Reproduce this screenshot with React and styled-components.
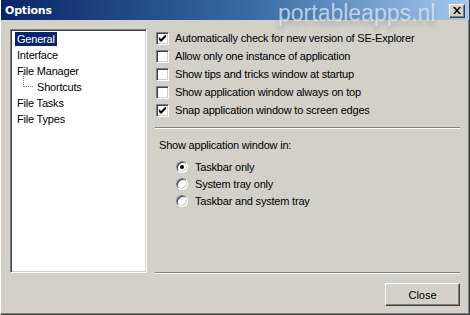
import React, { useState } from 'react';
import styled, { createGlobalStyle } from 'styled-components';

const CHECKS = [
  { id: 0, text: 'Automatically check for new version of SE-Explorer', checked: true },
  { id: 1, text: 'Allow only one instance of application', checked: false },
  { id: 2, text: 'Show tips and tricks window at startup', checked: false },
  { id: 3, text: 'Show application window always on top', checked: false },
  { id: 4, text: 'Snap application window to screen edges', checked: true },
];

const PLACES = [
  { id: 0, text: 'Taskbar only' },
  { id: 1, text: 'System tray only' },
  { id: 2, text: 'Taskbar and system tray' },
];

const PAGES = [
  { id: 0, text: 'General' },
  { id: 1, text: 'Interface' },
  { id: 2, text: 'File Manager' },
  { id: 3, text: 'Shortcuts', child: true },
  { id: 4, text: 'File Tasks' },
  { id: 5, text: 'File Types' },
];

const Options = () => {
  const [page, setPage] = useState(0);
  const [checks, setChecks] = useState(CHECKS.map(c => c.checked));
  const [place, setPlace] = useState(0);

  const toggle = i => {
    setChecks(current => current.map((v, j) => (j === i ? !v : v)));
  };

  return (
    <Window>
      <GlobalStyle />
      <TitleBar>
        <Title>Options</Title>
        <Watermark>portableapps.nl</Watermark>
        <CloseBox>
          <svg width="8" height="7" viewBox="0 0 8 7">
            <path d="M0 0h2l2 2.5L6 0h2L5 3.5 8 7H6L4 4.5 2 7H0l3-3.5z" fill="#000" />
          </svg>
        </CloseBox>
      </TitleBar>
      <Body>
        <Tree>
          {PAGES.map(({ id, text, child }) => (
            <TreeItem key={id} child={child} onClick={() => setPage(id)}>
              {child && <Connector />}
              <TreeLabel selected={page === id}>{text}</TreeLabel>
            </TreeItem>
          ))}
        </Tree>
        <Panel>
          <CheckList>
            {CHECKS.map(({ id, text }) => (
              <CheckRow key={id} onClick={() => toggle(id)}>
                <CheckBox>
                  {checks[id] && (
                    <svg width="7" height="7" viewBox="0 0 7 7">
                      <path d="M0 2v3l2 2 5-5V-1L2 4z" fill="#000" />
                    </svg>
                  )}
                </CheckBox>
                {text}
              </CheckRow>
            ))}
          </CheckList>
          <Separator />
          <GroupLabel>Show application window in:</GroupLabel>
          <RadioList>
            {PLACES.map(({ id, text }) => (
              <RadioRow key={id} onClick={() => setPlace(id)}>
                <Radio>{place === id && <Dot />}</Radio>
                {text}
              </RadioRow>
            ))}
          </RadioList>
          <Spacer />
          <Separator />
        </Panel>
      </Body>
      <Footer>
        <Button>Close</Button>
      </Footer>
    </Window>
  );
};

export default Options;

const GlobalStyle = createGlobalStyle`
  html, body {
    margin: 0;
    padding: 0;
    background: #d4d0c8;
  }
  body {
    font-family: 'Liberation Sans', Arial, sans-serif;
    font-size: 11px;
    letter-spacing: -0.2px;
    color: #000;
  }
`;

const Window = styled.div`
  position: relative;
  display: flex;
  flex-direction: column;
  box-sizing: border-box;
  width: 470px;
  height: 315px;
  background: #d4d0c8;
  border-left: 1px solid #ffffff;
  border-right: 1px solid #404040;
  border-bottom: 1px solid #404040;
  box-shadow: inset -1px -1px #808080;
  overflow: hidden;
`;

const TitleBar = styled.div`
  position: relative;
  display: flex;
  align-items: center;
  justify-content: space-between;
  height: 20px;
  padding: 0 4px 0 4px;
  background: linear-gradient(to right, #0a246a 0%, #3a6ea5 55%, #a6caf0 100%);
  flex-shrink: 0;
`;

const Title = styled.span`
  color: #ffffff;
  font-family: 'DejaVu Sans', sans-serif;
  font-weight: 700;
  font-size: 11px;
  letter-spacing: -0.2px;
`;

const Watermark = styled.span`
  position: absolute;
  left: 277px;
  top: 1px;
  font-family: 'Liberation Sans', Arial, sans-serif;
  font-size: 23px;
  line-height: 24px;
  letter-spacing: 0;
  color: rgba(225, 236, 252, 0.72);
  text-shadow: 0 4px 4px rgba(60, 60, 60, 0.25);
  pointer-events: none;
  z-index: 2;
`;

const CloseBox = styled.span`
  display: flex;
  align-items: center;
  justify-content: center;
  box-sizing: border-box;
  width: 16px;
  height: 14px;
  margin-top: 1px;
  background: #d4d0c8;
  border: 1px solid;
  border-color: #ffffff #404040 #404040 #ffffff;
  box-shadow: inset -1px -1px #808080;
`;

const Body = styled.div`
  display: flex;
  gap: 8px;
  padding: 9px 9px 0 9px;
`;

const Tree = styled.div`
  box-sizing: border-box;
  width: 137px;
  height: 244px;
  padding: 1px 3px;
  background: #ffffff;
  border: 1px solid;
  border-color: #808080 #ffffff #ffffff #808080;
  box-shadow: inset 1px 1px #404040, inset -1px -1px #d4d0c8;
`;

const TreeItem = styled.div`
  position: relative;
  display: flex;
  align-items: center;
  height: 16px;
  padding-left: ${({ child }) => (child ? '21px' : '1px')};
  cursor: default;
`;

const Connector = styled.span`
  position: absolute;
  left: 9px;
  top: -6px;
  width: 9px;
  height: 13px;
  border-left: 1px dotted #808080;
  border-bottom: 1px dotted #808080;
`;

const TreeLabel = styled.span`
  padding: 1px 2px;
  line-height: 12px;
  color: ${({ selected }) => (selected ? '#ffffff' : '#000000')};
  background: ${({ selected }) => (selected ? '#0a246a' : 'transparent')};
`;

const Panel = styled.div`
  display: flex;
  flex-direction: column;
  width: 305px;
  height: 245px;
`;

const CheckList = styled.div`
  display: flex;
  flex-direction: column;
`;

const CheckRow = styled.label`
  display: flex;
  align-items: center;
  gap: 6px;
  height: 18px;
  padding-left: 1px;
  cursor: default;
`;

const CheckBox = styled.span`
  display: flex;
  align-items: center;
  justify-content: center;
  box-sizing: border-box;
  width: 13px;
  height: 13px;
  background: #ffffff;
  border: 1px solid;
  border-color: #808080 #ffffff #ffffff #808080;
  box-shadow: inset 1px 1px #404040, inset -1px -1px #d4d0c8;
`;

const Separator = styled.div`
  height: 0;
  margin-top: 8px;
  border-top: 1px solid #808080;
  border-bottom: 1px solid #ffffff;
`;

const GroupLabel = styled.div`
  margin: 9px 0 0 4px;
  line-height: 14px;
`;

const RadioList = styled.div`
  display: flex;
  flex-direction: column;
  margin-top: 6px;
  padding-left: 21px;
`;

const RadioRow = styled.label`
  display: flex;
  align-items: center;
  gap: 7px;
  height: 17px;
  cursor: default;
`;

const Radio = styled.span`
  display: flex;
  align-items: center;
  justify-content: center;
  box-sizing: border-box;
  width: 12px;
  height: 12px;
  border-radius: 50%;
  background: #ffffff;
  border: 1px solid;
  border-color: #808080 #ffffff #ffffff #808080;
  box-shadow: inset 1px 1px #404040, inset -1px -1px #d4d0c8;
`;

const Dot = styled.span`
  width: 4px;
  height: 4px;
  border-radius: 50%;
  background: #000000;
`;

const Spacer = styled.div`
  flex: 1;
`;

const Footer = styled.div`
  display: flex;
  justify-content: flex-end;
  padding: 9px 9px 0 0;
`;

const Button = styled.button`
  box-sizing: border-box;
  width: 75px;
  height: 23px;
  padding: 0;
  font-family: 'Liberation Sans', Arial, sans-serif;
  font-size: 11px;
  color: #000;
  background: #d4d0c8;
  border: 1px solid;
  border-color: #ffffff #404040 #404040 #ffffff;
  box-shadow: inset -1px -1px #808080;
  outline: none;
`;
